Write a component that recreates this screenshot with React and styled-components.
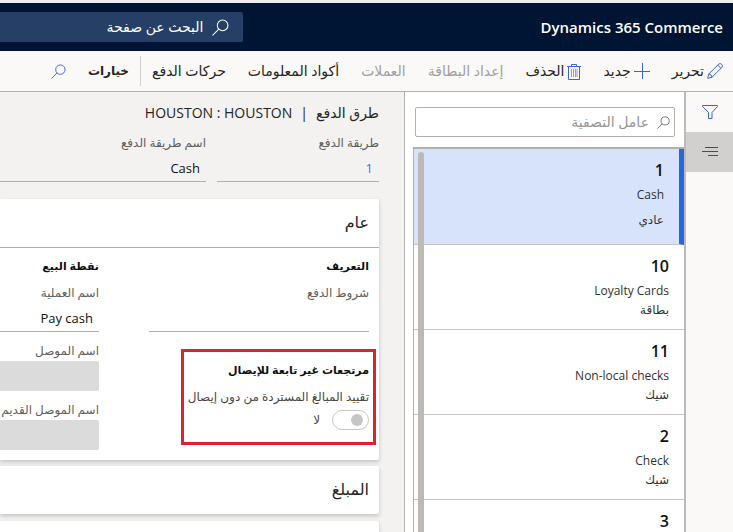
import React from "react";
import styled, { createGlobalStyle, css } from "styled-components";

const GlobalStyle = createGlobalStyle`
  * { box-sizing: border-box; }
  body { margin: 0; background: #f3f2f1; }
  body, button, input { font-family: "Open Sans", "Noto Sans", "DejaVu Sans", sans-serif; }
`;

const Page = styled.div`
  display: flex;
  flex-direction: column;
  height: 100vh;
  overflow: hidden;
  border-top: 3px solid #eeeff3;
  color: #252423;
`;

const TopBar = styled.header`
  display: flex;
  flex: none;
  align-items: center;
  height: 48px;
  padding-right: 10px;
  background: #001433;
`;

const Brand = styled.h1`
  margin: 0;
  color: #fff;
  font-size: 15px;
  font-weight: 600;
  line-height: 24px;
  white-space: nowrap;
`;

const PageSearch = styled.label`
  display: flex;
  flex: 1;
  align-items: center;
  gap: 9px;
  min-width: 0;
  height: 30px;
  margin-right: 297px;
  padding-right: 14px;
  border-radius: 0 2px 2px 0;
  background: #263f66;
  color: #fff;
`;

const SearchInput = styled.input`
  flex: 1;
  min-width: 0;
  padding: 0;
  border: 0;
  outline: 0;
  background: transparent;
  color: inherit;
  font-size: 14px;
  line-height: 20px;
  &::placeholder { color: ${(p) => p.$hint}; opacity: 1; }
`;

const Toolbar = styled.nav`
  display: flex;
  flex: none;
  align-items: center;
  gap: 22px;
  height: 41px;
  padding-right: 10px;
  border-bottom: 1px solid #b3b0ad;
  background: #faf9f8;
`;

const Command = styled.button`
  display: flex;
  flex: none;
  align-items: center;
  gap: 3px;
  padding: 0;
  border: 0;
  background: none;
  color: #252423;
  font-size: ${(p) => (p.$strong ? 12 : 14)}px;
  font-weight: ${(p) => (p.$strong ? 700 : 400)};
  line-height: 24px;
  white-space: nowrap;
  &:disabled { color: #a19f9d; }
`;

const Divider = styled.span`
  width: 1px;
  height: 30px;
  margin: 0 -11px;
  background: #d2d0ce;
`;

const Workspace = styled.div`
  display: flex;
  flex: 1;
  min-height: 0;
`;

const Rail = styled.aside`
  flex: none;
  width: 47px;
  background: #faf9f8;
`;

const RailButton = styled.button`
  display: flex;
  align-items: center;
  justify-content: center;
  width: 100%;
  height: 40px;
  padding: 0;
  border: 0;
  background: ${(p) => (p.$active ? "#d2d0ce" : "transparent")};
`;

const ListPanel = styled.section`
  display: flex;
  flex: none;
  flex-direction: column;
  width: 282px;
  border-left: 1px solid #b3b0ad;
  border-right: 2px solid #bdbab8;
  background: #fff;
`;

const FilterBox = styled.label`
  display: flex;
  flex: none;
  align-items: center;
  gap: 8px;
  height: 30px;
  margin: 15px 9px 10px 10px;
  padding-right: 4px;
  border: 1px solid #b3b0ad;
  border-radius: 2px;
  color: #605e5c;
`;

const ListFrame = styled.div`
  position: relative;
  flex: 1;
  min-height: 0;
  margin-left: 8px;
  overflow: hidden;
  border-top: 2px solid #b3b0ad;
  border-left: 1px solid #b3b0ad;
`;

const Thumb = styled.span`
  position: absolute;
  top: 3px;
  bottom: 0;
  left: 4px;
  width: 6px;
  border-radius: 3px 3px 0 0;
  background: #bdb9b6;
`;

const Records = styled.ul`
  margin: 0;
  padding: 0;
  list-style: none;
`;

const Record = styled.button`
  display: flex;
  flex-direction: column;
  width: 100%;
  padding: 9px 15px 10px;
  border: 0;
  border-bottom: 1px solid #c8c6c4;
  background: #fff;
  color: #323130;
  font-size: 12px;
  line-height: 19px;
  text-align: right;
  ${(p) => p.$selected && css`
    padding-bottom: 15px;
    border-right: 5px solid #2766e0;
    background: #d7e3fb;
  `}
`;

const RecordId = styled.strong`
  margin-bottom: 3px;
  color: #11100f;
  font-size: 16px;
  font-weight: 600;
  line-height: 24px;
`;

const RecordKind = styled.span`
  margin-top: ${(p) => (p.$spaced ? 6 : 0)}px;
`;

const Main = styled.main`
  display: flex;
  flex: 1;
  flex-direction: column;
  min-width: 0;
  padding: 10px 25px 0 0;
  overflow: hidden;
`;

const Crumbs = styled.h2`
  display: flex;
  gap: 8px;
  margin: 0 0 9px;
  font-size: 14px;
  font-weight: 400;
  line-height: 22px;
  white-space: nowrap;
`;

const KeyFields = styled.div`
  display: grid;
  grid-template-columns: 162px 1fr;
  flex: none;
  gap: 11px;
  margin-bottom: 17px;
`;

const Field = styled.label`
  display: flex;
  flex-direction: column;
  color: #605e5c;
  font-size: 12px;
  line-height: 20px;
  white-space: nowrap;
`;

const FieldInput = styled.input`
  width: 100%;
  height: 29px;
  padding: 1px 6px 0;
  border: 0;
  border-bottom: 1px solid #b3b0ad;
  outline: 0;
  background: transparent;
  color: ${(p) => (p.$link ? "#4f6bed" : "#11100f")};
  font-size: 13px;
  text-align: right;
  &:disabled {
    height: 30px;
    border: 0;
    border-radius: 0 2px 2px 0;
    background: #dbdbdb;
  }
`;

const Card = styled.section`
  flex: none;
  margin-bottom: ${(p) => (p.$open ? 6 : 7)}px;
  border-radius: 0 2px 2px 0;
  background: #fff;
  box-shadow: 0 2px 4px rgba(0, 0, 0, 0.2);
`;

const CardTitle = styled.h3`
  height: ${(p) => (p.$open ? 49 : 48)}px;
  margin: 0;
  padding: 0 10px;
  border-bottom: ${(p) => (p.$open ? "1px solid #b3b0ad" : "0")};
  color: #252423;
  font-size: 16px;
  font-weight: 400;
  line-height: 47px;
`;

const CardBody = styled.div`
  display: grid;
  grid-template-columns: 220px 1fr;
  gap: 50px;
  padding: 8px 10px 10px 0;
`;

const Column = styled.div`
  display: flex;
  flex-direction: column;
  min-width: 0;
`;

const GroupTitle = styled.h4`
  margin: 0 0 7px;
  color: #11100f;
  font-size: 11px;
  font-weight: 700;
  line-height: 20px;
  white-space: nowrap;
`;

const Stack = styled.div`
  display: flex;
  flex-direction: column;
  gap: 9px;
  margin-top: 9px;
`;

const Highlight = styled.div`
  width: 195px;
  height: 96px;
  margin: 17px -7px 0 0;
  padding: 8px 4px;
  border: 3px solid #d9232e;
`;

const SwitchField = styled.label`
  display: grid;
  grid-template-columns: 37px 1fr;
  align-items: center;
  column-gap: 12px;
  row-gap: 3px;
  color: #484644;
  font-size: 12px;
  line-height: 20px;
  white-space: nowrap;
`;

const SwitchName = styled.span`
  grid-column: 1 / -1;
`;

const Switch = styled.input`
  display: flex;
  align-items: center;
  width: 37px;
  height: 20px;
  margin: 0;
  padding: 0 5px;
  appearance: none;
  border: 1px solid #c8c6c4;
  border-radius: 10px;
  background: #fff;
  &::before {
    width: 12px;
    height: 12px;
    border-radius: 6px;
    background: #c8c6c4;
    content: "";
  }
`;

const Glyph = styled.svg`
  display: block;
  flex: none;
  fill: none;
  stroke: ${(p) => p.$tone || "#3d62dc"};
  stroke-width: 1;
`;

const Magnifier = ({ size, tone }) => (
  <Glyph width={size} height={size} viewBox="0 0 16 16" $tone={tone} aria-hidden="true">
    <circle cx="10" cy="6" r="5" />
    <path d="M6.4 9.6 0.5 15.5" />
  </Glyph>
);

const Pencil = () => (
  <Glyph width="16" height="16" viewBox="0 0 16 16" aria-hidden="true">
    <path d="M.7 15.3 1.8 11 11.8 1Q13.2-.1 14.7 1.3 16 2.8 15 4.2L5 14.2ZM1.8 11Q4.6 11.2 5 14.2M10.7 2.1 13.9 5.3" />
  </Glyph>
);

const Plus = () => (
  <Glyph width="16" height="16" viewBox="0 0 16 16" aria-hidden="true">
    <path d="M8.5 0V16M0 8.5H16" />
  </Glyph>
);

const Bin = () => (
  <Glyph width="14" height="17" viewBox="0 0 14 17" aria-hidden="true">
    <path d="M0 3.5H14M4.5 3V1.5H9.5V3M1.5 3.5V16.5H12.5V3.5" />
    <path d="M4.5 6V14M6.5 6V14M8.5 6V14M10 6V14" strokeOpacity=".6" />
  </Glyph>
);

const Funnel = () => (
  <Glyph width="16" height="16" viewBox="0 0 16 16" aria-hidden="true">
    <path d="M.5 1.5H15.5V2.5L10 8.5V14.5H6.5V8.5L.5 2.5Z" />
  </Glyph>
);

const Lines = () => (
  <Glyph width="16" height="10" viewBox="0 0 16 10" $tone="#0050ff" aria-hidden="true">
    <path d="M3 .5H16M0 4.5H16M6 8.5H16" />
  </Glyph>
);

const records = [
  { id: "1", name: "Cash", kind: "عادي", selected: true },
  { id: "10", name: "Loyalty Cards", kind: "بطاقة" },
  { id: "11", name: "Non-local checks", kind: "شيك" },
  { id: "2", name: "Check", kind: "شيك" },
  { id: "3", name: "", kind: "" },
];

export default function App() {
  return (
    <Page dir="rtl" lang="ar">
      <GlobalStyle />
      <TopBar>
        <Brand>Dynamics 365 Commerce</Brand>
        <PageSearch>
          <Magnifier size={17} tone="#fff" />
          <SearchInput $hint="#fff" placeholder="البحث عن صفحة" aria-label="البحث عن صفحة" />
        </PageSearch>
      </TopBar>
      <Toolbar>
        <Command><Pencil />تحرير</Command>
        <Command><Plus />جديد</Command>
        <Command><Bin />الحذف</Command>
        <Command disabled>إعداد البطاقة</Command>
        <Command disabled>العملات</Command>
        <Command>أكواد المعلومات</Command>
        <Command>حركات الدفع</Command>
        <Divider />
        <Command $strong>خيارات</Command>
        <Command aria-label="بحث"><Magnifier size={15} /></Command>
      </Toolbar>
      <Workspace>
        <Rail>
          <RailButton aria-label="تصفية"><Funnel /></RailButton>
          <RailButton $active aria-label="القائمة"><Lines /></RailButton>
        </Rail>
        <ListPanel>
          <FilterBox>
            <Magnifier size={13} tone="#605e5c" />
            <SearchInput $hint="#979593" placeholder="عامل التصفية" aria-label="عامل التصفية" />
          </FilterBox>
          <ListFrame>
            <Records>
              {records.map((r) => (
                <li key={r.id}>
                  <Record $selected={r.selected}>
                    <RecordId>{r.id}</RecordId>
                    <span>{r.name}</span>
                    <RecordKind $spaced={r.selected}>{r.kind}</RecordKind>
                  </Record>
                </li>
              ))}
            </Records>
            <Thumb />
          </ListFrame>
        </ListPanel>
        <Main>
          <Crumbs>
            <span>طرق الدفع</span>
            <span>|</span>
            <span>HOUSTON : HOUSTON</span>
          </Crumbs>
          <KeyFields>
            <Field>طريقة الدفع<FieldInput $link defaultValue="1" /></Field>
            <Field>اسم طريقة الدفع<FieldInput defaultValue="Cash" /></Field>
          </KeyFields>
          <Card $open>
            <CardTitle $open>عام</CardTitle>
            <CardBody>
              <Column>
                <GroupTitle>التعريف</GroupTitle>
                <Field>شروط الدفع<FieldInput /></Field>
                <Highlight>
                  <GroupTitle>مرتجعات غير تابعة للإيصال</GroupTitle>
                  <SwitchField>
                    <SwitchName>تقييد المبالغ المستردة من دون إيصال</SwitchName>
                    <Switch type="checkbox" role="switch" />
                    <span>لا</span>
                  </SwitchField>
                </Highlight>
              </Column>
              <Column>
                <GroupTitle>نقطة البيع</GroupTitle>
                <Field>اسم العملية<FieldInput defaultValue="Pay cash" /></Field>
                <Stack>
                  <Field>اسم الموصل<FieldInput disabled /></Field>
                  <Field>اسم الموصل القديم<FieldInput disabled /></Field>
                </Stack>
              </Column>
            </CardBody>
          </Card>
          <Card><CardTitle>المبلغ</CardTitle></Card>
          <Card><CardTitle /></Card>
        </Main>
      </Workspace>
    </Page>
  );
}
